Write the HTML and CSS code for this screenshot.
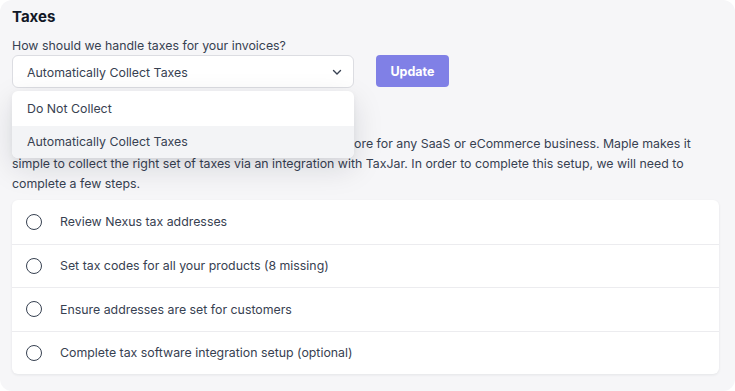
FILE: index.html
```html
<!DOCTYPE html>
<html lang="en">

<head>
  <meta charset="UTF-8">
  <meta name="viewport" content="width=device-width, initial-scale=1.0">
  <title>Taxes</title>

  <link rel="stylesheet" href="styles.css">
</head>

<body>
  <main class="panel">
    <h2 class="title">Taxes</h2>
    <label class="field-label" for="tax-mode">How should we handle taxes for your invoices?</label>

    <div class="select-row">
      <div class="select-wrap">
        <div class="select" id="tax-mode">
          <span>Automatically Collect Taxes</span>
          <svg class="chevron" width="12" height="12" viewBox="0 0 12 12" fill="none">
            <path d="M2.5 4.5 6 8l3.5-3.5" stroke="#374151" stroke-width="1.4" stroke-linecap="round" stroke-linejoin="round" />
          </svg>
        </div>
        <ul class="menu">
          <li class="menu-item">Do Not Collect</li>
          <li class="menu-item active">Automatically Collect Taxes</li>
        </ul>
      </div>
      <button class="btn-update">Update</button>
    </div>

    <p class="intro">
      Tax compliance is becoming increasingly complex, even more for any SaaS or eCommerce business. Maple makes it<br>
      simple to collect the right set of taxes via an integration with TaxJar. In order to complete this setup, we will need to<br>
      complete a few steps.
    </p>

    <section class="steps">
      <div class="step">
        <span class="circle"></span>
        <span>Review Nexus tax addresses</span>
      </div>
      <div class="step">
        <span class="circle"></span>
        <span>Set tax codes for all your products (8 missing)</span>
      </div>
      <div class="step">
        <span class="circle"></span>
        <span>Ensure addresses are set for customers</span>
      </div>
      <div class="step">
        <span class="circle"></span>
        <span>Complete tax software integration setup (optional)</span>
      </div>
    </section>
  </main>
</body>

</html>
```

FILE: styles.css
```css
html,
body {
  margin: 0;
  background: #fff;
}

body {
  color: #374151;
  font-family: Inter, "Noto Sans", sans-serif;
  font-size: 12.35px;
}

.panel {
  background: #f6f6f8;
  border-radius: 12px;
  box-sizing: border-box;
  height: 391px;
  padding: 7px 16px 17px 12px;
}

.title {
  color: #111827;
  font-size: 15px;
  font-weight: 700;
  line-height: 20px;
  margin: 0;
}

.field-label {
  display: block;
  line-height: 18px;
  margin-top: 10px;
}

.select-row {
  align-items: flex-start;
  column-gap: 22px;
  display: flex;
}

.select-wrap {
  position: relative;
  width: 342px;
}

.select {
  align-items: center;
  background: #fff;
  border: 1px solid #dcdde2;
  border-radius: 6px;
  box-sizing: border-box;
  display: flex;
  height: 33px;
  justify-content: space-between;
  padding: 1px 10px 0 14px;
}

.menu {
  background: #fff;
  border-radius: 6px;
  box-shadow: 0 10px 30px rgba(17, 24, 39, 0.13), 0 2px 6px rgba(17, 24, 39, 0.05);
  left: 0;
  list-style: none;
  margin: 0;
  overflow: hidden;
  padding: 2px 0 0;
  position: absolute;
  right: 0;
  top: 36px;
  z-index: 2;
}

.menu-item {
  height: 32.5px;
  line-height: 32.5px;
  padding: 0 15px;
}

.menu-item.active {
  background: #f3f4f6;
}

.btn-update {
  background: #8080e6;
  border: 0;
  border-radius: 4px;
  color: #fff;
  font-family: inherit;
  font-size: 12.5px;
  font-weight: 700;
  height: 32px;
  width: 73px;
}

.btn-update:hover {
  cursor: pointer;
}

.intro {
  line-height: 20px;
  margin: 46px 0 0;
}

.steps {
  background: #fff;
  border-radius: 6px;
  box-shadow: 0 1px 3px rgba(17, 24, 39, 0.08);
  margin-top: 6px;
}

.step {
  align-items: center;
  border-top: 1px solid #ececef;
  box-sizing: border-box;
  column-gap: 18px;
  display: flex;
  height: 43.5px;
  padding-left: 14px;
}

.step:first-child {
  border-top: 0;
}

.circle {
  border: 1.6px solid #374151;
  border-radius: 50%;
  box-sizing: border-box;
  height: 16px;
  width: 16px;
}
```
